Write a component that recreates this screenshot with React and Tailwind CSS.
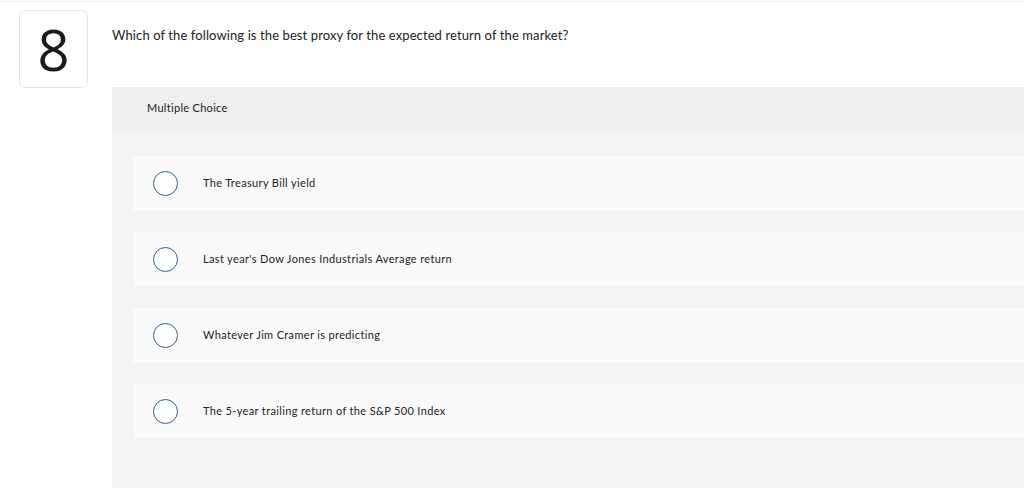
import React from 'react';

const options = [
    "The Treasury Bill yield",
    "Last year's Dow Jones Industrials Average return",
    "Whatever Jim Cramer is predicting",
    "The 5-year trailing return of the S&P 500 Index",
];

const App = () => {
    return (
        <div className="w-[1024px] h-[488px] overflow-hidden bg-white text-[#222]" style={{ fontFamily: 'Lato, "Liberation Sans", sans-serif' }}>
            {/* top rule */}
            <div className="h-[2px] border-b border-[#ececec]" />

            <div className="flex pt-[8px]">
                {/* Question number */}
                <div className="ml-[19px] w-[69px] h-[78px] shrink-0 rounded-[6px] border border-[#e6e6e6] flex items-center justify-center">
                    <span className="text-[56px] leading-none font-normal text-[#1a1a1a]" style={{ fontFamily: '"Open Sans", sans-serif' }}>8</span>
                </div>

                <div className="ml-[24px] flex-1 flex flex-col">
                    <p className="mt-[17px] text-[13px] leading-[16px] tracking-[0.1px] text-[#222]">
                        Which of the following is the best proxy for the expected return of the market?
                    </p>

                    {/* Answer panel */}
                    <div className="mt-[44px] bg-[#f4f4f4] h-[420px]">
                        <div className="h-[42px] bg-[#efefef] flex items-center pl-[35px] text-[11px] tracking-[0.3px] text-[#222]">
                            Multiple Choice
                        </div>

                        <div className="pl-[21px] pt-[27px] flex flex-col gap-[21px]">
                            {options.map((opt) => (
                                <div key={opt} className="h-[55px] bg-[#fafafa] rounded-l-[3px] flex items-center">
                                    <div className="ml-[20px] w-[25px] h-[25px] rounded-full border-[1.5px] border-[#2e5d96] bg-white shrink-0" />
                                    <span className="ml-[25px] text-[11px] tracking-[0.35px] text-[#222]">{opt}</span>
                                </div>
                            ))}
                        </div>
                    </div>
                </div>
            </div>
        </div>
    );
};

export default App;
